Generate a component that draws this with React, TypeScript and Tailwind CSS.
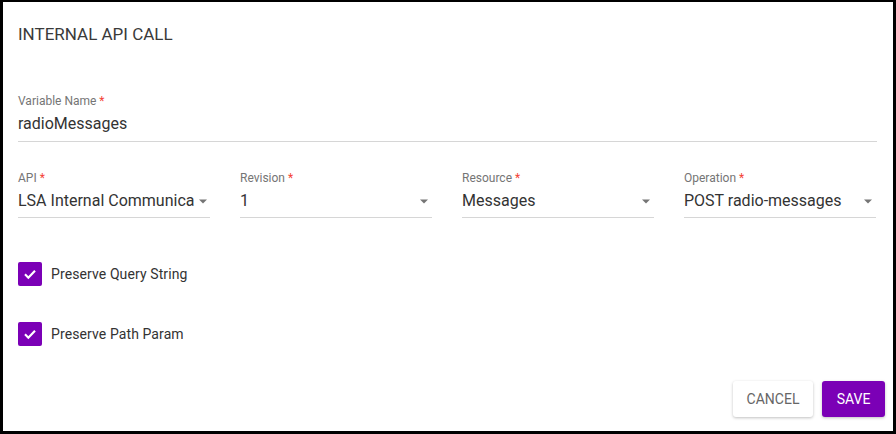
import React from "react";

const Arrow = () => (
  <svg width="10" height="5" viewBox="0 0 10 5" className="shrink-0">
    <path d="M1 0.5 L9 0.5 L5 4.5 Z" fill="#757575" />
  </svg>
);

function Select({ label, value }: { label: string; value: string }) {
  return (
    <div className="w-[192px] flex flex-col">
      <div className="text-[12px] leading-4 text-[#757575]">
        {label} <span className="text-[#f44336]">*</span>
      </div>
      <div className="mt-[3px] flex items-center h-6 pb-[4px] box-content border-b border-[#d6d6d6]">
        <span className="flex-1 whitespace-nowrap text-[16px] leading-6 text-[#333]">{value}</span>
        <span className="ml-1 mr-[3px]">
          <Arrow />
        </span>
      </div>
    </div>
  );
}

function Check({ label }: { label: string }) {
  return (
    <div className="flex items-center h-6">
      <div className="w-6 h-6 rounded-[2px] bg-[#7b00b6] flex items-center justify-center">
        <svg width="16" height="16" viewBox="0 0 24 24">
          <path d="M4.5 12.5 L9.5 17.5 L19.5 7" fill="none" stroke="white" strokeWidth="3.2" />
        </svg>
      </div>
      <span className="ml-[9px] text-[14px] tracking-[0.1px] text-[#333]">{label}</span>
    </div>
  );
}

export default function App() {
  return (
    <div
      className="w-[896px] h-[434px] bg-black pt-[2px] pl-[3px] pr-[3px] pb-[3px]"
      style={{ fontFamily: "Roboto, 'Liberation Sans', sans-serif" }}
    >
      <div className="w-full h-full bg-white flex flex-col pl-[15px] pr-[16px]">
        <div className="pt-[20px] text-[17px] leading-6 text-[#3a3a3a]">INTERNAL API CALL</div>
        <div className="mt-[47px] text-[12px] leading-4 text-[#757575]">
          Variable Name <span className="text-[#f44336]">*</span>
        </div>
        <div className="mt-[3px] h-6 pb-[5px] box-content border-b border-[#d6d6d6] text-[16px] leading-6 text-[#333]">
          radioMessages
        </div>
        <div className="mt-[28px] flex gap-[30px]">
          <Select label="API" value="LSA Internal Communica" />
          <Select label="Revision" value="1" />
          <Select label="Resource" value="Messages" />
          <Select label="Operation" value="POST radio-messages" />
        </div>
        <div className="mt-[44px]">
          <Check label="Preserve Query String" />
        </div>
        <div className="mt-[36px]">
          <Check label="Preserve Path Param" />
        </div>
        <div className="mt-[35px] flex justify-end gap-[9px] -mr-[8px]">
          <button className="h-[36px] w-[80px] rounded-[3px] bg-white text-[14px] text-[#666] shadow-[0_1px_3px_rgba(0,0,0,0.25)]">
            CANCEL
          </button>
          <button className="h-[36px] w-[63px] rounded-[3px] bg-[#7b00b6] text-[14px] text-white shadow-[0_1px_3px_rgba(0,0,0,0.25)]">
            SAVE
          </button>
        </div>
      </div>
    </div>
  );
}
